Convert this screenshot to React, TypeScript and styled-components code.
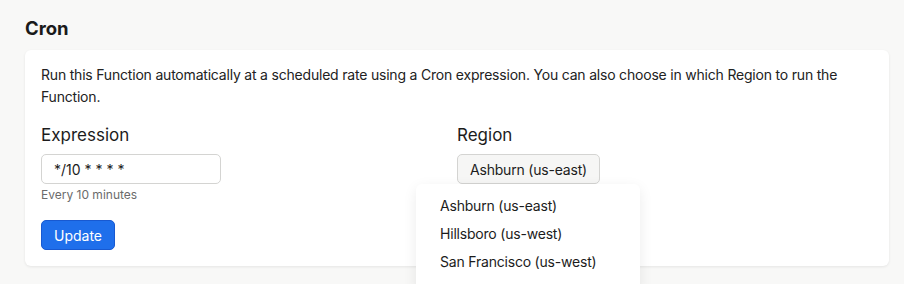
import styled, { createGlobalStyle } from "styled-components";

const Global = createGlobalStyle`
  body {
    margin: 0;
    background: #f8f8f7;
    font-family: Inter, "Noto Sans", sans-serif;
    color: #1c1c1c;
  }
`;

const Page = styled.div`
  padding: 16px 15px 18px 25px;
`;

const Title = styled.h2`
  margin: 0 0 10px 0;
  font-size: 18.5px;
  line-height: 24px;
  font-weight: 700;
  color: #1a1a1a;
`;

const Card = styled.section`
  background: #fff;
  border-radius: 6px;
  box-shadow: 0 1px 3px rgba(0, 0, 0, 0.08);
  padding: 14px 16px 16px;
`;

const Intro = styled.p`
  margin: 0 0 15px;
  font-size: 14px;
  line-height: 22px;
  letter-spacing: -0.2px;
  color: #222;
`;

const Columns = styled.div`
  display: grid;
  grid-template-columns: 1fr 1fr;
`;

const Field = styled.div`
  position: relative;
  display: flex;
  flex-direction: column;
  align-items: flex-start;
`;

const Label = styled.label`
  font-size: 17px;
  line-height: 24px;
  margin-bottom: 7px;
  color: #1c1c1c;
`;

const Input = styled.input`
  box-sizing: border-box;
  width: 180px;
  height: 30px;
  padding: 0 12px;
  border: 1px solid #d4d4d2;
  border-radius: 5px;
  font-family: inherit;
  font-size: 14px;
  color: #1c1c1c;
  outline: none;
`;

const Hint = styled.div`
  margin-top: 3px;
  font-size: 12px;
  line-height: 16px;
  color: #6b6b6b;
`;

const PrimaryButton = styled.button`
  margin-top: 17px;
  height: 30px;
  padding: 0 12px;
  border: 1px solid #1859d1;
  border-radius: 5px;
  background: #1f6feb;
  color: #fff;
  font-family: inherit;
  font-size: 14px;
`;

const SelectButton = styled.button`
  height: 30px;
  padding: 0 12px;
  border: 1px solid #d4d4d2;
  border-radius: 5px;
  background: #f6f6f5;
  color: #1c1c1c;
  font-family: inherit;
  font-size: 14px;
  letter-spacing: -0.2px;
`;

const Menu = styled.ul`
  position: absolute;
  top: 61px;
  left: -41px;
  width: 224px;
  margin: 0;
  padding: 8px 0 16px;
  list-style: none;
  background: #fff;
  border-radius: 6px;
  box-shadow: 0 4px 14px rgba(0, 0, 0, 0.08);
  z-index: 2;
`;

const MenuItem = styled.li`
  height: 28px;
  line-height: 28px;
  padding: 0 24px;
  font-size: 14px;
  letter-spacing: -0.2px;
  color: #1c1c1c;
`;

const regions = ["Ashburn (us-east)", "Hillsboro (us-west)", "San Francisco (us-west)"];

export default function App() {
  return (
    <>
      <Global />
      <Page>
        <Title>Cron</Title>
        <Card>
          <Intro>
            Run this Function automatically at a scheduled rate using a Cron expression. You can also choose in which
            Region to run the Function.
          </Intro>
          <Columns>
            <Field>
              <Label>Expression</Label>
              <Input defaultValue="*/10 * * * *" />
              <Hint>Every 10 minutes</Hint>
              <PrimaryButton>Update</PrimaryButton>
            </Field>
            <Field>
              <Label>Region</Label>
              <SelectButton>{regions[0]}</SelectButton>
              <Menu>
                {regions.map((r) => (
                  <MenuItem key={r}>{r}</MenuItem>
                ))}
              </Menu>
            </Field>
          </Columns>
        </Card>
      </Page>
    </>
  );
}
